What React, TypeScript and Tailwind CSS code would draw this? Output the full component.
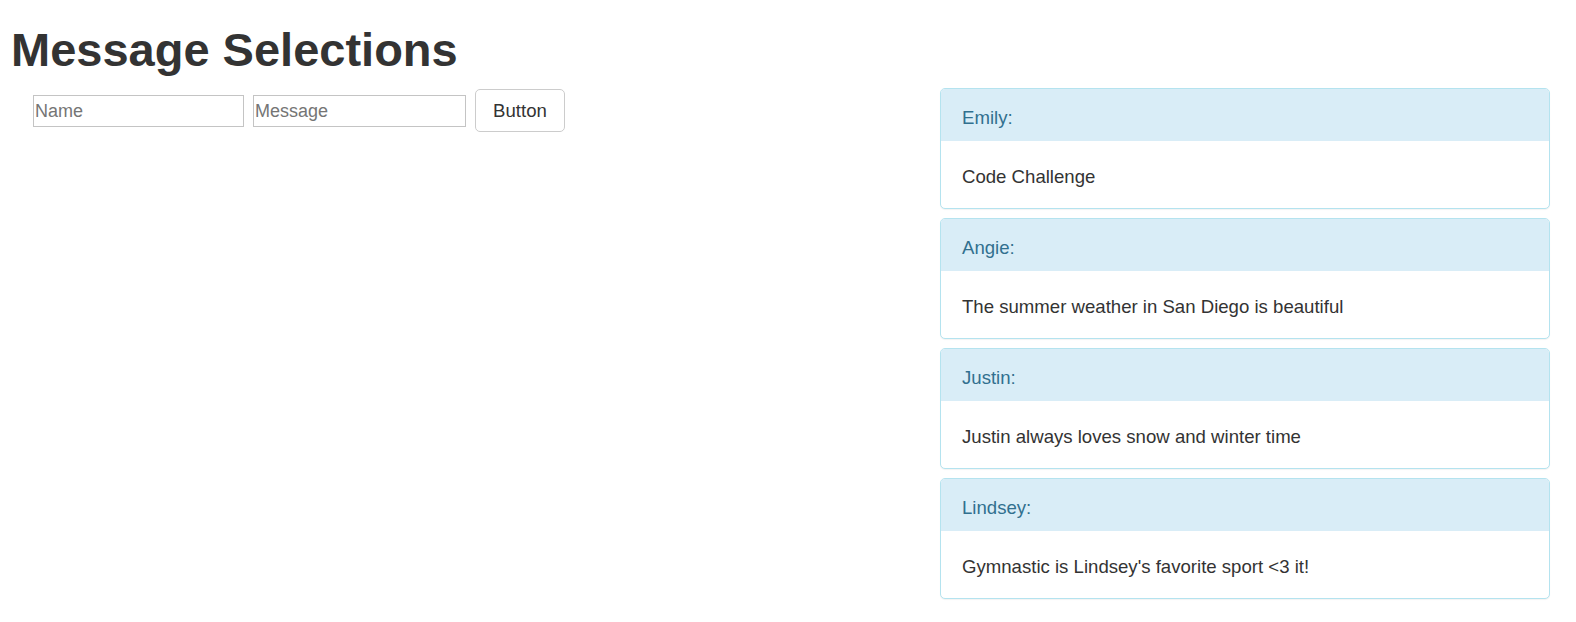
import { useState } from "react";

type Message = {
  name: string;
  text: string;
};

const initialMessages: Message[] = [
  { name: "Emily", text: "Code Challenge" },
  { name: "Angie", text: "The summer weather in San Diego is beautiful" },
  { name: "Justin", text: "Justin always loves snow and winter time" },
  { name: "Lindsey", text: "Gymnastic is Lindsey's favorite sport <3 it!" },
];

function MessagePanel({ message }: { message: Message }) {
  return (
    <div className="overflow-hidden rounded-[5px] border border-[#b4e3ef] bg-white shadow-[0_1px_1px_rgba(0,0,0,0.05)]">
      <div className="bg-[#d9edf7] pb-[10px] pl-[21px] pr-[20px] pt-[16px] text-[18.6px] leading-[26px] text-[#31708f]">
        {message.name}:
      </div>
      <div className="pb-[18px] pl-[21px] pr-[20px] pt-[23px] text-[18.6px] leading-[26px] text-[#333333]">
        {message.text}
      </div>
    </div>
  );
}

export default function App() {
  const [messages, setMessages] = useState<Message[]>(initialMessages);
  const [name, setName] = useState("");
  const [text, setText] = useState("");

  const handleAdd = () => {
    if (!name.trim() || !text.trim()) return;
    setMessages([...messages, { name, text }]);
    setName("");
    setText("");
  };

  return (
    <div className="flex min-h-[622px] w-full items-start justify-between bg-white font-['Liberation_Sans',Arial,sans-serif] text-[#333333]">
      {/* Coluna esquerda: título e formulário */}
      <div>
        <h1 className="mt-[24px] pl-[11px] text-[47px] font-bold leading-[52px] text-[#333333]">
          Message Selections
        </h1>
        <div className="mt-[13px] flex items-center gap-[9px] pl-[33px]">
          <input
            value={name}
            onChange={(e) => setName(e.target.value)}
            placeholder="Name"
            className="h-[32px] w-[211px] border border-[#c4c4c4] px-[1px] pt-[2px] text-[18px] text-[#333333] outline-none placeholder:text-[#757575]"
          />
          <input
            value={text}
            onChange={(e) => setText(e.target.value)}
            placeholder="Message"
            className="h-[32px] w-[213px] border border-[#c4c4c4] px-[1px] pt-[2px] text-[18px] text-[#333333] outline-none placeholder:text-[#757575]"
          />
          <button
            type="button"
            onClick={handleAdd}
            className="h-[43px] w-[90px] rounded-[5px] border border-[#cccccc] bg-white pt-[1px] text-[18.6px] text-[#333333]"
          >
            Button
          </button>
        </div>
      </div>

      {/* Coluna direita: lista de mensagens */}
      <div className="mr-[26px] mt-[88px] flex w-[610px] flex-col gap-[9px]">
        {messages.map((message, index) => (
          <MessagePanel key={index} message={message} />
        ))}
      </div>
    </div>
  );
}
